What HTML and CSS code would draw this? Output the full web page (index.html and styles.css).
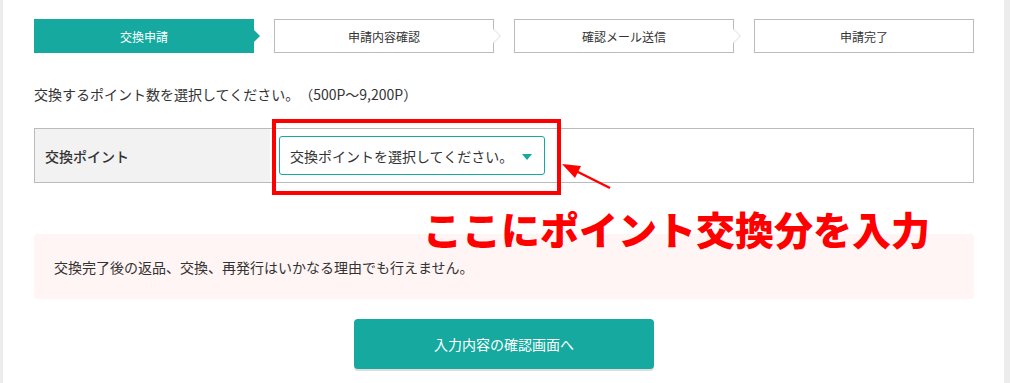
FILE: index.html
```html
<!DOCTYPE html>
<html lang="ja">
<head>
    <meta charset="UTF-8">
    <meta name="viewport" content="width=device-width, initial-scale=1.0">
    <title>ポイント交換申請</title>
    <link rel="stylesheet" href="styles.css">
</head>
<body>
    <div class="page">
        <ol class="steps">
            <li class="step active">交換申請</li>
            <li class="step next">申請内容確認</li>
            <li class="step next">確認メール送信</li>
            <li class="step">申請完了</li>
        </ol>

        <p class="lead">交換するポイント数を選択してください。（500P〜9,200P）</p>

        <div class="form-row">
            <div class="form-label">交換ポイント</div>
            <div class="form-value">
                <div class="select">交換ポイントを選択してください。<span class="caret"></span></div>
            </div>
        </div>

        <div class="notice">交換完了後の返品、交換、再発行はいかなる理由でも行えません。</div>

        <div class="actions">
            <button class="submit">入力内容の確認画面へ</button>
        </div>

        <!-- 注釈 -->
        <div class="mark-box"></div>
        <svg class="mark-arrow" width="1001" height="383" viewBox="0 0 1001 383">
            <line x1="607" y1="188" x2="570" y2="169.5" stroke="#ff0000" stroke-width="2.5"/>
            <polygon points="559,164 578,166 572,178" fill="#ff0000"/>
        </svg>
        <div class="mark-text">ここにポイント交換分を入力</div>
    </div>
</body>
</html>
```

FILE: styles.css
```css
body {
    margin: 0;
    background-color: #ececec;
    font-family: "Noto Sans CJK JP", "Noto Sans", sans-serif;
    color: #333;
    text-spacing-trim: space-all;
}
.page {
    position: relative;
    margin: 0 6px 0 3px;
    min-height: 383px;
    box-sizing: border-box;
    padding: 19px 30px 0 31px;
    background-color: #fff;
}
.steps {
    display: flex;
    gap: 20px;
    margin: 0;
    padding: 0;
    list-style: none;
}
.step {
    position: relative;
    flex: 1;
    height: 34px;
    box-sizing: border-box;
    border: 1px solid #bbb;
    display: flex;
    align-items: center;
    justify-content: center;
    font-size: 12px;
    color: #333;
    background-color: #fff;
}
.step.active {
    background-color: #15a99f;
    border-color: #15a99f;
    color: #fff;
}
.step.active::after {
    content: "";
    position: absolute;
    right: -7px;
    top: 10px;
    border-style: solid;
    border-width: 6px 0 6px 6px;
    border-color: transparent transparent transparent #15a99f;
}
.step.next::before,
.step.next::after {
    content: "";
    position: absolute;
    top: 9px;
    border-style: solid;
    border-width: 7px 0 7px 7px;
}
.step.next::before {
    right: -8px;
    border-color: transparent transparent transparent #ddd;
}
.step.next::after {
    right: -7px;
    border-color: transparent transparent transparent #fff;
}
.lead {
    margin: 31px 0 0;
    font-size: 14px;
    line-height: 20px;
}
.form-row {
    display: flex;
    margin-top: 24px;
    height: 55px;
    box-sizing: border-box;
    border: 1px solid #bbb;
}
.form-label {
    flex: 0 0 235px;
    box-sizing: border-box;
    padding-left: 10px;
    display: flex;
    align-items: center;
    background-color: #f2f2f2;
    font-size: 14px;
    font-weight: 500;
}
.form-value {
    flex: 1;
    display: flex;
    align-items: center;
    padding-left: 9px;
}
.select {
    position: relative;
    width: 266px;
    height: 39px;
    box-sizing: border-box;
    padding-left: 10px;
    display: flex;
    align-items: center;
    border: 1px solid #15a99f;
    border-radius: 3px;
    font-size: 14px;
    color: #333;
}
.caret {
    position: absolute;
    right: 12px;
    top: 17px;
    border-style: solid;
    border-width: 6px 5.5px 0 5.5px;
    border-color: #15a99f transparent transparent transparent;
}
.notice {
    margin-top: 51px;
    height: 65px;
    box-sizing: border-box;
    padding: 0 20px;
    display: flex;
    align-items: center;
    background-color: #fff5f4;
    border-radius: 4px;
    font-size: 14px;
}
.actions {
    display: flex;
    justify-content: center;
    margin-top: 20px;
}
.submit {
    width: 300px;
    height: 50px;
    border: none;
    border-radius: 4px;
    background-color: #15a99f;
    box-shadow: 0 2px 0 #ddd;
    color: #fff;
    font-family: inherit;
    font-size: 14px;
    cursor: pointer;
}
.mark-box {
    position: absolute;
    left: 269px;
    top: 119px;
    width: 289px;
    height: 76px;
    box-sizing: border-box;
    border: 4px solid #ff0000;
}
.mark-arrow {
    position: absolute;
    left: 0;
    top: 0;
    pointer-events: none;
}
.mark-text {
    position: absolute;
    left: 420px;
    top: 205px;
    font-size: 39px;
    line-height: 46px;
    font-weight: 900;
    letter-spacing: 0;
    color: #ff0000;
    white-space: nowrap;
}
```
